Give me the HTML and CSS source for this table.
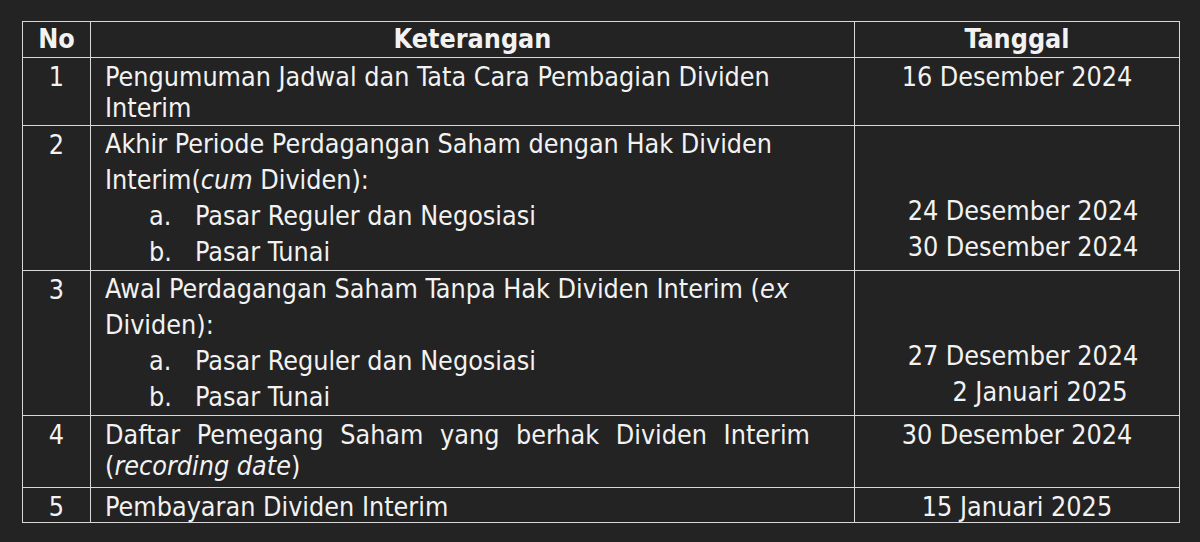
FILE: index.html
```html
<!DOCTYPE html>
<html lang="id">
<head>
<meta charset="utf-8">
<title>Jadwal Dividen Interim</title>
<link rel="stylesheet" href="styles.css">
</head>
<body>
<table class="sched">
  <colgroup>
    <col class="c-no">
    <col class="c-ket">
    <col class="c-tgl">
  </colgroup>
  <thead>
    <tr class="r-head">
      <th>No</th>
      <th>Keterangan</th>
      <th>Tanggal</th>
    </tr>
  </thead>
  <tbody>
    <tr class="r1">
      <td class="no">1</td>
      <td class="ket"><span class="ln">Pengumuman Jadwal dan Tata Cara Pembagian Dividen</span><span class="ln">Interim</span></td>
      <td class="tgl">16 Desember 2024</td>
    </tr>
    <tr class="r2">
      <td class="no">2</td>
      <td class="ket">
        <span class="ln l-sp">Akhir Periode Perdagangan Saham dengan Hak Dividen</span>
        <span class="ln l-sp">Interim(<i>cum</i> Dividen):</span>
        <span class="ln l-sp li"><span class="mk">a.</span>Pasar Reguler dan Negosiasi</span>
        <span class="ln l-sp li"><span class="mk">b.</span>Pasar Tunai</span>
      </td>
      <td class="tgl dates">
        <span class="ln l-sp d1">24 Desember 2024</span>
        <span class="ln l-sp d1">30 Desember 2024</span>
      </td>
    </tr>
    <tr class="r3">
      <td class="no">3</td>
      <td class="ket">
        <span class="ln l-sp">Awal Perdagangan Saham Tanpa Hak Dividen Interim (<i>ex</i></span>
        <span class="ln l-sp">Dividen):</span>
        <span class="ln l-sp li"><span class="mk">a.</span>Pasar Reguler dan Negosiasi</span>
        <span class="ln l-sp li"><span class="mk">b.</span>Pasar Tunai</span>
      </td>
      <td class="tgl dates">
        <span class="ln l-sp d1">27 Desember 2024</span>
        <span class="ln l-sp d2">2 Januari 2025</span>
      </td>
    </tr>
    <tr class="r4">
      <td class="no">4</td>
      <td class="ket"><span class="ln just">Daftar Pemegang Saham yang berhak Dividen Interim</span><span class="ln">(<i>recording date</i>)</span></td>
      <td class="tgl">30 Desember 2024</td>
    </tr>
    <tr class="r5">
      <td class="no">5</td>
      <td class="ket"><span class="ln">Pembayaran Dividen Interim</span></td>
      <td class="tgl">15 Januari 2025</td>
    </tr>
  </tbody>
</table>
</body>
</html>
```
FILE: styles.css
```css
html, body {
  margin: 0;
  padding: 0;
  background: #232323;
}
body {
  padding: 21px 0 0 22px;
  font-family: "DejaVu Sans Condensed", "DejaVu Sans", sans-serif;
  color: #f2f2f2;
  font-size: 26.7px;
}
.sched {
  border-collapse: collapse;
  table-layout: fixed;
  width: 1157px;
}
.c-no { width: 68px; }
.c-ket { width: 764px; }
.c-tgl { width: 325px; }
.sched th, .sched td {
  border: 1px solid #d8d8d8;
  vertical-align: top;
  padding: 0;
}
.sched th {
  font-weight: bold;
  text-align: center;
  line-height: 34px;
  font-size: 26.7px;
}
.r-head { height: 36px; }
.r1 { height: 68px; }
.r2, .r3 { height: 145px; }
.r4 { height: 72px; }
.r5 { height: 35px; }
.no {
  text-align: center;
  line-height: 31px;
  padding-top: 3px !important;
}
.ket {
  padding: 3px 40px 0 14px !important;
  line-height: 31px;
}
.tgl {
  text-align: center;
  line-height: 31px;
  padding-top: 3px !important;
}
.ln { display: block; white-space: nowrap; }
.l-sp { line-height: 36px; }
.r2 .ket, .r3 .ket { padding-top: 0 !important; }
.li { padding-left: 44px; }
.mk { display: inline-block; width: 46px; }
.dates { padding-top: 67px !important; }
.d1 { padding-left: 12px; }
.d2 { padding-left: 46px; }
.just {
  white-space: normal;
  text-align: justify;
  text-align-last: justify;
}
.r4 .ket { padding-right: 44px !important; }
```
